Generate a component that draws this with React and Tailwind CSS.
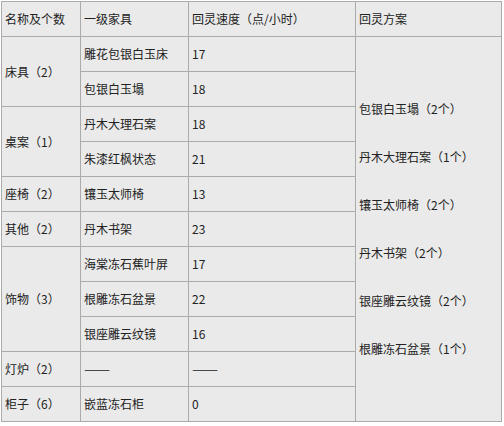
import React from "react";

const cell = "bg-[#eaeaea] flex items-center pl-[3px] text-[12px] text-[#222222] whitespace-nowrap";

const rows = [
  { group: "床具（2）", gcls: "col-start-1 row-start-2 row-span-2", a: "雕花包银白玉床", b: "17", r: "row-start-2" },
  { a: "包银白玉塌", b: "18", r: "row-start-3" },
  { group: "桌案（1）", gcls: "col-start-1 row-start-4 row-span-2", a: "丹木大理石案", b: "18", r: "row-start-4" },
  { a: "朱漆红枫状态", b: "21", r: "row-start-5" },
  { group: "座椅（2）", gcls: "col-start-1 row-start-6", a: "镶玉太师椅", b: "13", r: "row-start-6" },
  { group: "其他（2）", gcls: "col-start-1 row-start-7", a: "丹木书架", b: "23", r: "row-start-7" },
  { group: "饰物（3）", gcls: "col-start-1 row-start-8 row-span-3", a: "海棠冻石蕉叶屏", b: "17", r: "row-start-8" },
  { a: "根雕冻石盆景", b: "22", r: "row-start-9" },
  { a: "银座雕云纹镜", b: "16", r: "row-start-10" },
  { group: "灯炉（2）", gcls: "col-start-1 row-start-11", a: "——", b: "——", r: "row-start-11", dash: true },
  { group: "柜子（6）", gcls: "col-start-1 row-start-12", a: "嵌蓝冻石柜", b: "0", r: "row-start-12" },
];

const plan = [
  "包银白玉塌（2个）",
  "丹木大理石案（1个）",
  "镶玉太师椅（2个）",
  "丹木书架（2个）",
  "银座雕云纹镜（2个）",
  "根雕冻石盆景（1个）",
];

function Text({ children, dash }) {
  if (dash) {
    return <span className="inline-block origin-left scale-x-[1.3]">{children}</span>;
  }
  return children;
}

export default function App() {
  return (
    <div className="bg-white w-[504px] h-[426px] pt-px pl-px font-['Noto_Sans_CJK_SC','Noto_Sans',sans-serif]">
      <div className="grid grid-cols-[78px_107px_166px_145px] grid-rows-[repeat(12,34px)] gap-px p-px bg-[#ababab] w-[501px]">
        <div className={`${cell} col-start-1 row-start-1`}>名称及个数</div>
        <div className={`${cell} col-start-2 row-start-1`}>一级家具</div>
        <div className={`${cell} col-start-3 row-start-1`}>回灵速度（点/小时）</div>
        <div className={`${cell} col-start-4 row-start-1`}>回灵方案</div>
        {rows.map((r, i) => (
          <React.Fragment key={i}>
            {r.group && <div className={`${cell} ${r.gcls}`}>{r.group}</div>}
            <div className={`${cell} col-start-2 ${r.r}`}>
              <Text dash={r.dash}>{r.a}</Text>
            </div>
            <div className={`${cell} col-start-3 ${r.r}`}>
              <Text dash={r.dash}>{r.b}</Text>
            </div>
          </React.Fragment>
        ))}
        <div className="bg-[#eaeaea] col-start-4 row-start-2 row-span-11 flex flex-col justify-center pl-[3px] text-[12px] text-[#222222] whitespace-nowrap">
          {plan.map((p) => (
            <div key={p} className="h-[48px] flex items-center">{p}</div>
          ))}
        </div>
      </div>
    </div>
  );
}
